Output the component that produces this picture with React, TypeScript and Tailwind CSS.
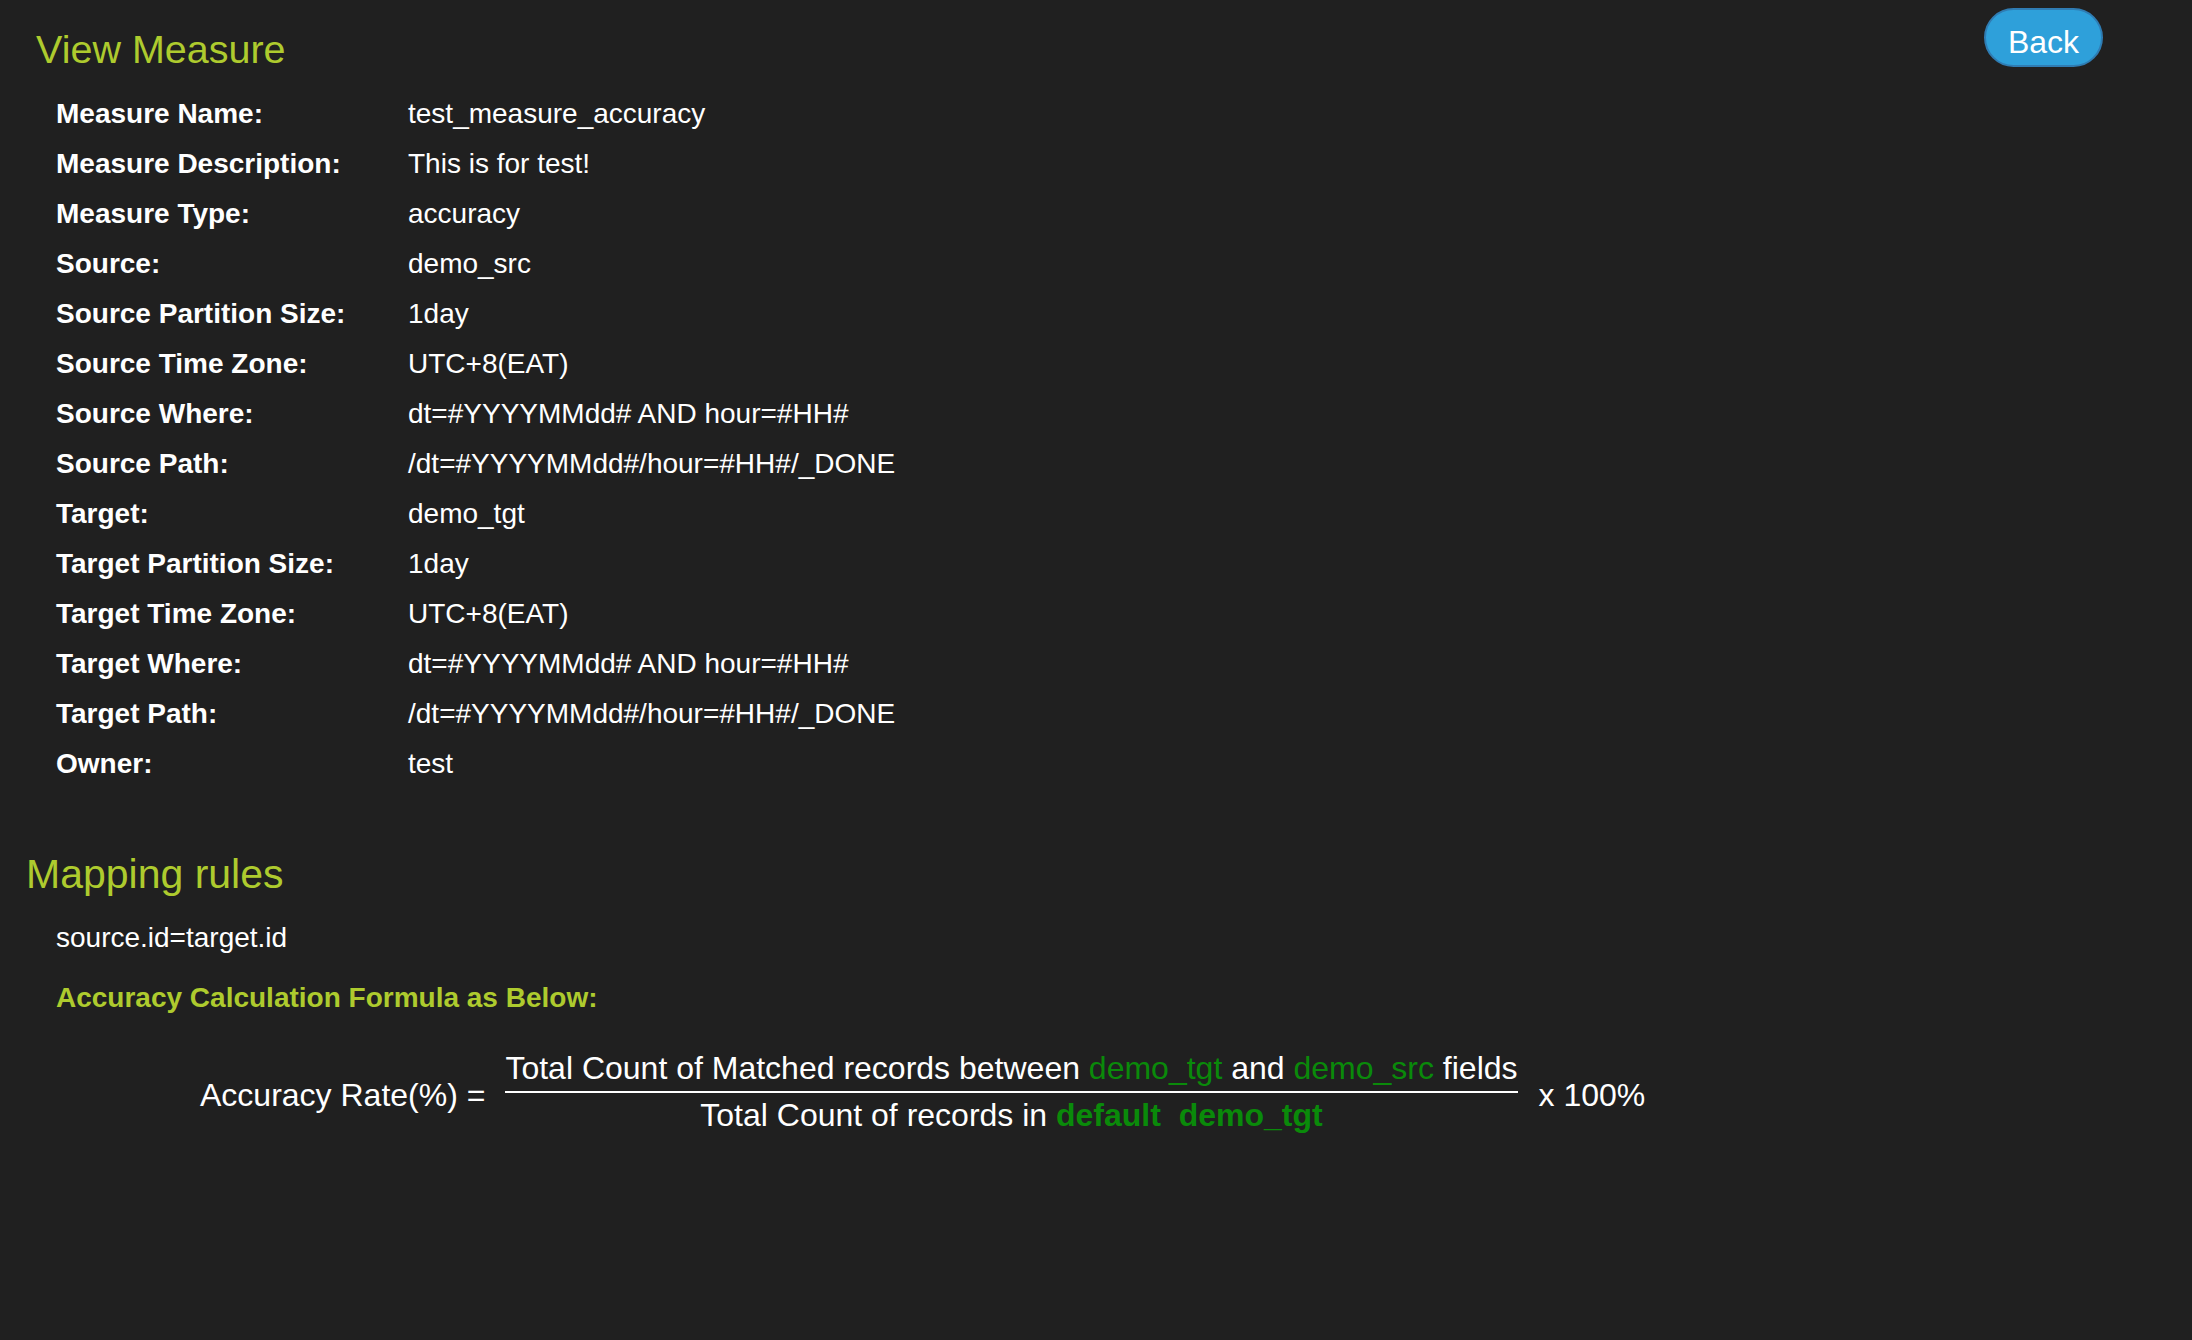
import React from "react";

const rows: [string, string][] = [
  ["Measure Name:", "test_measure_accuracy"],
  ["Measure Description:", "This is for test!"],
  ["Measure Type:", "accuracy"],
  ["Source:", "demo_src"],
  ["Source Partition Size:", "1day"],
  ["Source Time Zone:", "UTC+8(EAT)"],
  ["Source Where:", "dt=#YYYYMMdd# AND hour=#HH#"],
  ["Source Path:", "/dt=#YYYYMMdd#/hour=#HH#/_DONE"],
  ["Target:", "demo_tgt"],
  ["Target Partition Size:", "1day"],
  ["Target Time Zone:", "UTC+8(EAT)"],
  ["Target Where:", "dt=#YYYYMMdd# AND hour=#HH#"],
  ["Target Path:", "/dt=#YYYYMMdd#/hour=#HH#/_DONE"],
  ["Owner:", "test"],
];

const App: React.FC = () => {
  return (
    <div
      className="min-h-screen w-full bg-[#202020] text-white"
      style={{ fontFamily: '"Liberation Sans", Arial, sans-serif' }}
    >
      {/* header */}
      <div className="flex items-start justify-between pl-[36px] pr-[89px] pt-[8px]">
        <h1 className="mt-[17px] text-[39.5px] leading-[48px] font-normal text-[#aecb2e]">
          View Measure
        </h1>
        <button className="flex h-[59px] w-[119px] items-center justify-center rounded-full border-2 border-[#2f7cb3] bg-[#2ea0da] pt-[8px] text-[32px] leading-[36px] text-white">
          Back
        </button>
      </div>

      {/* details */}
      <div className="mt-[16px] pl-[56px]">
        {rows.map(([label, value]) => (
          <div key={label} className="flex text-[28px] leading-[50px]">
            <div className="w-[352px] font-bold">{label}</div>
            <div>{value}</div>
          </div>
        ))}
      </div>

      {/* mapping rules */}
      <h2 className="mt-[61px] pl-[26px] text-[41px] leading-[48px] font-normal text-[#aecb2e]">
        Mapping rules
      </h2>
      <div className="mt-[15px] pl-[56px] text-[28px] leading-[50px]">
        source.id=target.id
      </div>
      <div className="mt-[10px] pl-[56px] text-[28px] leading-[50px] font-bold text-[#aecb2e]">
        Accuracy Calculation Formula as Below:
      </div>

      {/* formula */}
      <div className="mt-[25px] flex items-center pl-[200px] text-[32px] leading-[40px]">
        <div className="mt-[6px]">Accuracy Rate(%) =</div>
        <div className="ml-[20px] flex flex-col items-center">
          <div className="whitespace-nowrap">
            Total Count of Matched records between{" "}
            <span className="text-[#0a8a0a]">demo_tgt</span> and{" "}
            <span className="text-[#0a8a0a]">demo_src</span> fields
          </div>
          <div className="mt-[3px] h-[2px] w-full bg-white" />
          <div className="whitespace-nowrap pt-[2px]">
            Total Count of records in{" "}
            <span className="font-bold text-[#0a8a0a]">default&nbsp; demo_tgt</span>
          </div>
        </div>
        <div className="ml-[21px] mt-[6px]">x 100%</div>
      </div>
    </div>
  );
};

export default App;
